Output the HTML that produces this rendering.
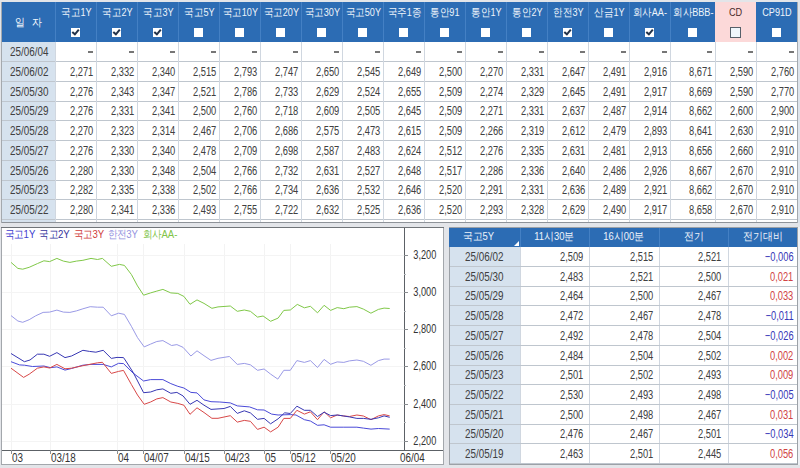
<!DOCTYPE html>
<html><head><meta charset="utf-8"><style>
html,body{margin:0;padding:0;}
body{width:800px;height:468px;position:relative;overflow:hidden;background:#e3e5e9;font-family:"Liberation Sans",sans-serif;}
body>div,body>svg{position:absolute;}
.t{white-space:nowrap;line-height:16px;height:16px;}
.t span{display:inline-block;}
</style></head><body>
<div style="left:2px;top:2px;width:795px;height:220px;background:#ffffff;"></div>
<div style="left:2px;top:42px;width:53px;height:180px;background:#d6e2ee;"></div>
<div style="left:2px;top:2px;width:795px;height:40px;background:#2c6cb4;"></div>
<div style="left:715px;top:2px;width:41px;height:40px;background:#fcd9d9;"></div>
<div style="left:55px;top:2px;width:1px;height:40px;background:#4480c4;"></div>
<div style="left:96px;top:2px;width:1px;height:40px;background:#4480c4;"></div>
<div style="left:137px;top:2px;width:1px;height:40px;background:#4480c4;"></div>
<div style="left:178px;top:2px;width:1px;height:40px;background:#4480c4;"></div>
<div style="left:219px;top:2px;width:1px;height:40px;background:#4480c4;"></div>
<div style="left:260px;top:2px;width:1px;height:40px;background:#4480c4;"></div>
<div style="left:301px;top:2px;width:1px;height:40px;background:#4480c4;"></div>
<div style="left:342px;top:2px;width:1px;height:40px;background:#4480c4;"></div>
<div style="left:383px;top:2px;width:1px;height:40px;background:#4480c4;"></div>
<div style="left:424px;top:2px;width:1px;height:40px;background:#4480c4;"></div>
<div style="left:465px;top:2px;width:1px;height:40px;background:#4480c4;"></div>
<div style="left:506px;top:2px;width:1px;height:40px;background:#4480c4;"></div>
<div style="left:547px;top:2px;width:1px;height:40px;background:#4480c4;"></div>
<div style="left:588px;top:2px;width:1px;height:40px;background:#4480c4;"></div>
<div style="left:629px;top:2px;width:1px;height:40px;background:#4480c4;"></div>
<div style="left:670px;top:2px;width:1px;height:40px;background:#4480c4;"></div>
<div style="left:2px;top:61px;width:795px;height:1px;background:#bfc6ce;"></div>
<div style="left:2px;top:81px;width:795px;height:1px;background:#bfc6ce;"></div>
<div style="left:2px;top:101px;width:795px;height:1px;background:#bfc6ce;"></div>
<div style="left:2px;top:120px;width:795px;height:1px;background:#bfc6ce;"></div>
<div style="left:2px;top:140px;width:795px;height:1px;background:#bfc6ce;"></div>
<div style="left:2px;top:160px;width:795px;height:1px;background:#bfc6ce;"></div>
<div style="left:2px;top:180px;width:795px;height:1px;background:#bfc6ce;"></div>
<div style="left:2px;top:199px;width:795px;height:1px;background:#bfc6ce;"></div>
<div style="left:2px;top:219px;width:795px;height:1px;background:#bfc6ce;"></div>
<div style="left:55px;top:42px;width:1px;height:180px;background:#d0d7e0;"></div>
<div style="left:96px;top:42px;width:1px;height:180px;background:#d0d7e0;"></div>
<div style="left:137px;top:42px;width:1px;height:180px;background:#d0d7e0;"></div>
<div style="left:178px;top:42px;width:1px;height:180px;background:#d0d7e0;"></div>
<div style="left:219px;top:42px;width:1px;height:180px;background:#d0d7e0;"></div>
<div style="left:260px;top:42px;width:1px;height:180px;background:#d0d7e0;"></div>
<div style="left:301px;top:42px;width:1px;height:180px;background:#d0d7e0;"></div>
<div style="left:342px;top:42px;width:1px;height:180px;background:#d0d7e0;"></div>
<div style="left:383px;top:42px;width:1px;height:180px;background:#d0d7e0;"></div>
<div style="left:424px;top:42px;width:1px;height:180px;background:#d0d7e0;"></div>
<div style="left:465px;top:42px;width:1px;height:180px;background:#d0d7e0;"></div>
<div style="left:506px;top:42px;width:1px;height:180px;background:#d0d7e0;"></div>
<div style="left:547px;top:42px;width:1px;height:180px;background:#d0d7e0;"></div>
<div style="left:588px;top:42px;width:1px;height:180px;background:#d0d7e0;"></div>
<div style="left:629px;top:42px;width:1px;height:180px;background:#d0d7e0;"></div>
<div style="left:670px;top:42px;width:1px;height:180px;background:#d0d7e0;"></div>
<div style="left:715px;top:42px;width:1px;height:180px;background:#d0d7e0;"></div>
<div style="left:756px;top:42px;width:1px;height:180px;background:#d0d7e0;"></div>
<div style="left:1px;top:222px;width:797px;height:1px;background:#8e9399;"></div>
<div style="left:1px;top:2px;width:1px;height:221px;background:#a4a9ae;"></div>
<div style="left:797px;top:2px;width:1px;height:221px;background:#a4a9ae;"></div>
<div class="t" style="left:1px;top:13.600000000000001px;width:54px;text-align:center;color:#f4f8fc;font-size:10.5px;"><span style="transform:scaleX(0.9);transform-origin:50% 50%">일&nbsp;&nbsp;&nbsp;자</span></div>
<div class="t" style="left:55px;top:4.300000000000001px;width:42px;text-align:center;color:#eef4fb;font-size:10.5px;"><span style="transform:scaleX(0.87);transform-origin:50% 50%">국고1Y</span></div>
<div style="left:71px;top:28px;width:9px;height:9px;background:#ffffff"></div>
<svg style="left:71px;top:28px" width="9" height="9" viewBox="0 0 9 9"><path d="M1.3 3.9 L3.9 6.3 L7.8 1.6" stroke="#23334a" stroke-width="2" fill="none"/></svg>
<div class="t" style="left:96px;top:4.300000000000001px;width:42px;text-align:center;color:#eef4fb;font-size:10.5px;"><span style="transform:scaleX(0.87);transform-origin:50% 50%">국고2Y</span></div>
<div style="left:112px;top:28px;width:9px;height:9px;background:#ffffff"></div>
<svg style="left:112px;top:28px" width="9" height="9" viewBox="0 0 9 9"><path d="M1.3 3.9 L3.9 6.3 L7.8 1.6" stroke="#23334a" stroke-width="2" fill="none"/></svg>
<div class="t" style="left:137px;top:4.300000000000001px;width:42px;text-align:center;color:#eef4fb;font-size:10.5px;"><span style="transform:scaleX(0.87);transform-origin:50% 50%">국고3Y</span></div>
<div style="left:153px;top:28px;width:9px;height:9px;background:#ffffff"></div>
<svg style="left:153px;top:28px" width="9" height="9" viewBox="0 0 9 9"><path d="M1.3 3.9 L3.9 6.3 L7.8 1.6" stroke="#23334a" stroke-width="2" fill="none"/></svg>
<div class="t" style="left:178px;top:4.300000000000001px;width:42px;text-align:center;color:#eef4fb;font-size:10.5px;"><span style="transform:scaleX(0.87);transform-origin:50% 50%">국고5Y</span></div>
<div style="left:194px;top:28px;width:9px;height:9px;background:#ffffff"></div>
<div class="t" style="left:219px;top:4.300000000000001px;width:42px;text-align:center;color:#eef4fb;font-size:10.5px;"><span style="transform:scaleX(0.87);transform-origin:50% 50%">국고10Y</span></div>
<div style="left:235px;top:28px;width:9px;height:9px;background:#ffffff"></div>
<div class="t" style="left:260px;top:4.300000000000001px;width:42px;text-align:center;color:#eef4fb;font-size:10.5px;"><span style="transform:scaleX(0.87);transform-origin:50% 50%">국고20Y</span></div>
<div style="left:276px;top:28px;width:9px;height:9px;background:#ffffff"></div>
<div class="t" style="left:301px;top:4.300000000000001px;width:42px;text-align:center;color:#eef4fb;font-size:10.5px;"><span style="transform:scaleX(0.87);transform-origin:50% 50%">국고30Y</span></div>
<div style="left:317px;top:28px;width:9px;height:9px;background:#ffffff"></div>
<div class="t" style="left:342px;top:4.300000000000001px;width:42px;text-align:center;color:#eef4fb;font-size:10.5px;"><span style="transform:scaleX(0.87);transform-origin:50% 50%">국고50Y</span></div>
<div style="left:358px;top:28px;width:9px;height:9px;background:#ffffff"></div>
<div class="t" style="left:383px;top:4.300000000000001px;width:42px;text-align:center;color:#eef4fb;font-size:10.5px;"><span style="transform:scaleX(0.87);transform-origin:50% 50%">국주1종</span></div>
<div style="left:399px;top:28px;width:9px;height:9px;background:#ffffff"></div>
<div class="t" style="left:424px;top:4.300000000000001px;width:42px;text-align:center;color:#eef4fb;font-size:10.5px;"><span style="transform:scaleX(0.87);transform-origin:50% 50%">통안91</span></div>
<div style="left:440px;top:28px;width:9px;height:9px;background:#ffffff"></div>
<div class="t" style="left:465px;top:4.300000000000001px;width:42px;text-align:center;color:#eef4fb;font-size:10.5px;"><span style="transform:scaleX(0.87);transform-origin:50% 50%">통안1Y</span></div>
<div style="left:481px;top:28px;width:9px;height:9px;background:#ffffff"></div>
<div class="t" style="left:506px;top:4.300000000000001px;width:42px;text-align:center;color:#eef4fb;font-size:10.5px;"><span style="transform:scaleX(0.87);transform-origin:50% 50%">통안2Y</span></div>
<div style="left:522px;top:28px;width:9px;height:9px;background:#ffffff"></div>
<div class="t" style="left:547px;top:4.300000000000001px;width:42px;text-align:center;color:#eef4fb;font-size:10.5px;"><span style="transform:scaleX(0.87);transform-origin:50% 50%">한전3Y</span></div>
<div style="left:563px;top:28px;width:9px;height:9px;background:#ffffff"></div>
<svg style="left:563px;top:28px" width="9" height="9" viewBox="0 0 9 9"><path d="M1.3 3.9 L3.9 6.3 L7.8 1.6" stroke="#23334a" stroke-width="2" fill="none"/></svg>
<div class="t" style="left:588px;top:4.300000000000001px;width:42px;text-align:center;color:#eef4fb;font-size:10.5px;"><span style="transform:scaleX(0.87);transform-origin:50% 50%">산금1Y</span></div>
<div style="left:604px;top:28px;width:9px;height:9px;background:#ffffff"></div>
<div class="t" style="left:629px;top:4.300000000000001px;width:42px;text-align:center;color:#eef4fb;font-size:10.5px;"><span style="transform:scaleX(0.87);transform-origin:50% 50%">회사AA-</span></div>
<div style="left:645px;top:28px;width:9px;height:9px;background:#ffffff"></div>
<svg style="left:645px;top:28px" width="9" height="9" viewBox="0 0 9 9"><path d="M1.3 3.9 L3.9 6.3 L7.8 1.6" stroke="#23334a" stroke-width="2" fill="none"/></svg>
<div class="t" style="left:670px;top:4.300000000000001px;width:46px;text-align:center;color:#eef4fb;font-size:10.5px;"><span style="transform:scaleX(0.87);transform-origin:50% 50%">회사BBB-</span></div>
<div style="left:688px;top:28px;width:9px;height:9px;background:#ffffff"></div>
<div class="t" style="left:715px;top:4.300000000000001px;width:42px;text-align:center;color:#4a2c2c;font-size:10.5px;"><span style="transform:scaleX(0.87);transform-origin:50% 50%">CD</span></div>
<div style="left:730px;top:27px;width:9px;height:9px;background:#f0f6fb;border:1px solid #56606a"></div>
<div class="t" style="left:756px;top:4.300000000000001px;width:42px;text-align:center;color:#eef4fb;font-size:10.5px;"><span style="transform:scaleX(0.87);transform-origin:50% 50%">CP91D</span></div>
<div style="left:772px;top:28px;width:9px;height:9px;background:#ffffff"></div>
<div class="t" style="left:3px;top:44.1px;width:53px;text-align:center;color:#404040;font-size:12.5px;"><span style="transform:scaleX(0.79);transform-origin:50% 50%">25/06/04</span></div>
<div style="left:88px;top:51px;width:5px;height:2px;background:#767676;"></div>
<div style="left:129px;top:51px;width:5px;height:2px;background:#767676;"></div>
<div style="left:170px;top:51px;width:5px;height:2px;background:#767676;"></div>
<div style="left:211px;top:51px;width:5px;height:2px;background:#767676;"></div>
<div style="left:252px;top:51px;width:5px;height:2px;background:#767676;"></div>
<div style="left:293px;top:51px;width:5px;height:2px;background:#767676;"></div>
<div style="left:334px;top:51px;width:5px;height:2px;background:#767676;"></div>
<div style="left:375px;top:51px;width:5px;height:2px;background:#767676;"></div>
<div style="left:416px;top:51px;width:5px;height:2px;background:#767676;"></div>
<div style="left:457px;top:51px;width:5px;height:2px;background:#767676;"></div>
<div style="left:498px;top:51px;width:5px;height:2px;background:#767676;"></div>
<div style="left:539px;top:51px;width:5px;height:2px;background:#767676;"></div>
<div style="left:580px;top:51px;width:5px;height:2px;background:#767676;"></div>
<div style="left:621px;top:51px;width:5px;height:2px;background:#767676;"></div>
<div style="left:662px;top:51px;width:5px;height:2px;background:#767676;"></div>
<div style="left:707px;top:51px;width:5px;height:2px;background:#767676;"></div>
<div style="left:748px;top:51px;width:5px;height:2px;background:#767676;"></div>
<div style="left:789px;top:51px;width:5px;height:2px;background:#767676;"></div>
<div class="t" style="left:3px;top:63.599999999999994px;width:53px;text-align:center;color:#404040;font-size:12.5px;"><span style="transform:scaleX(0.79);transform-origin:50% 50%">25/06/02</span></div>
<div class="t" style="left:55px;top:63.599999999999994px;width:38px;text-align:right;color:#404040;font-size:12.5px;"><span style="transform:scaleX(0.745);transform-origin:100% 50%">2,271</span></div>
<div class="t" style="left:96px;top:63.599999999999994px;width:38px;text-align:right;color:#404040;font-size:12.5px;"><span style="transform:scaleX(0.745);transform-origin:100% 50%">2,332</span></div>
<div class="t" style="left:137px;top:63.599999999999994px;width:38px;text-align:right;color:#404040;font-size:12.5px;"><span style="transform:scaleX(0.745);transform-origin:100% 50%">2,340</span></div>
<div class="t" style="left:178px;top:63.599999999999994px;width:38px;text-align:right;color:#404040;font-size:12.5px;"><span style="transform:scaleX(0.745);transform-origin:100% 50%">2,515</span></div>
<div class="t" style="left:219px;top:63.599999999999994px;width:38px;text-align:right;color:#404040;font-size:12.5px;"><span style="transform:scaleX(0.745);transform-origin:100% 50%">2,793</span></div>
<div class="t" style="left:260px;top:63.599999999999994px;width:38px;text-align:right;color:#404040;font-size:12.5px;"><span style="transform:scaleX(0.745);transform-origin:100% 50%">2,747</span></div>
<div class="t" style="left:301px;top:63.599999999999994px;width:38px;text-align:right;color:#404040;font-size:12.5px;"><span style="transform:scaleX(0.745);transform-origin:100% 50%">2,650</span></div>
<div class="t" style="left:342px;top:63.599999999999994px;width:38px;text-align:right;color:#404040;font-size:12.5px;"><span style="transform:scaleX(0.745);transform-origin:100% 50%">2,545</span></div>
<div class="t" style="left:383px;top:63.599999999999994px;width:38px;text-align:right;color:#404040;font-size:12.5px;"><span style="transform:scaleX(0.745);transform-origin:100% 50%">2,649</span></div>
<div class="t" style="left:424px;top:63.599999999999994px;width:38px;text-align:right;color:#404040;font-size:12.5px;"><span style="transform:scaleX(0.745);transform-origin:100% 50%">2,500</span></div>
<div class="t" style="left:465px;top:63.599999999999994px;width:38px;text-align:right;color:#404040;font-size:12.5px;"><span style="transform:scaleX(0.745);transform-origin:100% 50%">2,270</span></div>
<div class="t" style="left:506px;top:63.599999999999994px;width:38px;text-align:right;color:#404040;font-size:12.5px;"><span style="transform:scaleX(0.745);transform-origin:100% 50%">2,331</span></div>
<div class="t" style="left:547px;top:63.599999999999994px;width:38px;text-align:right;color:#404040;font-size:12.5px;"><span style="transform:scaleX(0.745);transform-origin:100% 50%">2,647</span></div>
<div class="t" style="left:588px;top:63.599999999999994px;width:38px;text-align:right;color:#404040;font-size:12.5px;"><span style="transform:scaleX(0.745);transform-origin:100% 50%">2,491</span></div>
<div class="t" style="left:629px;top:63.599999999999994px;width:38px;text-align:right;color:#404040;font-size:12.5px;"><span style="transform:scaleX(0.745);transform-origin:100% 50%">2,916</span></div>
<div class="t" style="left:670px;top:63.599999999999994px;width:42px;text-align:right;color:#404040;font-size:12.5px;"><span style="transform:scaleX(0.745);transform-origin:100% 50%">8,671</span></div>
<div class="t" style="left:715px;top:63.599999999999994px;width:38px;text-align:right;color:#404040;font-size:12.5px;"><span style="transform:scaleX(0.745);transform-origin:100% 50%">2,590</span></div>
<div class="t" style="left:756px;top:63.599999999999994px;width:38px;text-align:right;color:#404040;font-size:12.5px;"><span style="transform:scaleX(0.745);transform-origin:100% 50%">2,760</span></div>
<div class="t" style="left:3px;top:83.6px;width:53px;text-align:center;color:#404040;font-size:12.5px;"><span style="transform:scaleX(0.79);transform-origin:50% 50%">25/05/30</span></div>
<div class="t" style="left:55px;top:83.6px;width:38px;text-align:right;color:#404040;font-size:12.5px;"><span style="transform:scaleX(0.745);transform-origin:100% 50%">2,276</span></div>
<div class="t" style="left:96px;top:83.6px;width:38px;text-align:right;color:#404040;font-size:12.5px;"><span style="transform:scaleX(0.745);transform-origin:100% 50%">2,343</span></div>
<div class="t" style="left:137px;top:83.6px;width:38px;text-align:right;color:#404040;font-size:12.5px;"><span style="transform:scaleX(0.745);transform-origin:100% 50%">2,347</span></div>
<div class="t" style="left:178px;top:83.6px;width:38px;text-align:right;color:#404040;font-size:12.5px;"><span style="transform:scaleX(0.745);transform-origin:100% 50%">2,521</span></div>
<div class="t" style="left:219px;top:83.6px;width:38px;text-align:right;color:#404040;font-size:12.5px;"><span style="transform:scaleX(0.745);transform-origin:100% 50%">2,786</span></div>
<div class="t" style="left:260px;top:83.6px;width:38px;text-align:right;color:#404040;font-size:12.5px;"><span style="transform:scaleX(0.745);transform-origin:100% 50%">2,733</span></div>
<div class="t" style="left:301px;top:83.6px;width:38px;text-align:right;color:#404040;font-size:12.5px;"><span style="transform:scaleX(0.745);transform-origin:100% 50%">2,629</span></div>
<div class="t" style="left:342px;top:83.6px;width:38px;text-align:right;color:#404040;font-size:12.5px;"><span style="transform:scaleX(0.745);transform-origin:100% 50%">2,524</span></div>
<div class="t" style="left:383px;top:83.6px;width:38px;text-align:right;color:#404040;font-size:12.5px;"><span style="transform:scaleX(0.745);transform-origin:100% 50%">2,655</span></div>
<div class="t" style="left:424px;top:83.6px;width:38px;text-align:right;color:#404040;font-size:12.5px;"><span style="transform:scaleX(0.745);transform-origin:100% 50%">2,509</span></div>
<div class="t" style="left:465px;top:83.6px;width:38px;text-align:right;color:#404040;font-size:12.5px;"><span style="transform:scaleX(0.745);transform-origin:100% 50%">2,274</span></div>
<div class="t" style="left:506px;top:83.6px;width:38px;text-align:right;color:#404040;font-size:12.5px;"><span style="transform:scaleX(0.745);transform-origin:100% 50%">2,329</span></div>
<div class="t" style="left:547px;top:83.6px;width:38px;text-align:right;color:#404040;font-size:12.5px;"><span style="transform:scaleX(0.745);transform-origin:100% 50%">2,645</span></div>
<div class="t" style="left:588px;top:83.6px;width:38px;text-align:right;color:#404040;font-size:12.5px;"><span style="transform:scaleX(0.745);transform-origin:100% 50%">2,491</span></div>
<div class="t" style="left:629px;top:83.6px;width:38px;text-align:right;color:#404040;font-size:12.5px;"><span style="transform:scaleX(0.745);transform-origin:100% 50%">2,917</span></div>
<div class="t" style="left:670px;top:83.6px;width:42px;text-align:right;color:#404040;font-size:12.5px;"><span style="transform:scaleX(0.745);transform-origin:100% 50%">8,669</span></div>
<div class="t" style="left:715px;top:83.6px;width:38px;text-align:right;color:#404040;font-size:12.5px;"><span style="transform:scaleX(0.745);transform-origin:100% 50%">2,590</span></div>
<div class="t" style="left:756px;top:83.6px;width:38px;text-align:right;color:#404040;font-size:12.5px;"><span style="transform:scaleX(0.745);transform-origin:100% 50%">2,770</span></div>
<div class="t" style="left:3px;top:103.1px;width:53px;text-align:center;color:#404040;font-size:12.5px;"><span style="transform:scaleX(0.79);transform-origin:50% 50%">25/05/29</span></div>
<div class="t" style="left:55px;top:103.1px;width:38px;text-align:right;color:#404040;font-size:12.5px;"><span style="transform:scaleX(0.745);transform-origin:100% 50%">2,276</span></div>
<div class="t" style="left:96px;top:103.1px;width:38px;text-align:right;color:#404040;font-size:12.5px;"><span style="transform:scaleX(0.745);transform-origin:100% 50%">2,331</span></div>
<div class="t" style="left:137px;top:103.1px;width:38px;text-align:right;color:#404040;font-size:12.5px;"><span style="transform:scaleX(0.745);transform-origin:100% 50%">2,341</span></div>
<div class="t" style="left:178px;top:103.1px;width:38px;text-align:right;color:#404040;font-size:12.5px;"><span style="transform:scaleX(0.745);transform-origin:100% 50%">2,500</span></div>
<div class="t" style="left:219px;top:103.1px;width:38px;text-align:right;color:#404040;font-size:12.5px;"><span style="transform:scaleX(0.745);transform-origin:100% 50%">2,760</span></div>
<div class="t" style="left:260px;top:103.1px;width:38px;text-align:right;color:#404040;font-size:12.5px;"><span style="transform:scaleX(0.745);transform-origin:100% 50%">2,718</span></div>
<div class="t" style="left:301px;top:103.1px;width:38px;text-align:right;color:#404040;font-size:12.5px;"><span style="transform:scaleX(0.745);transform-origin:100% 50%">2,609</span></div>
<div class="t" style="left:342px;top:103.1px;width:38px;text-align:right;color:#404040;font-size:12.5px;"><span style="transform:scaleX(0.745);transform-origin:100% 50%">2,505</span></div>
<div class="t" style="left:383px;top:103.1px;width:38px;text-align:right;color:#404040;font-size:12.5px;"><span style="transform:scaleX(0.745);transform-origin:100% 50%">2,645</span></div>
<div class="t" style="left:424px;top:103.1px;width:38px;text-align:right;color:#404040;font-size:12.5px;"><span style="transform:scaleX(0.745);transform-origin:100% 50%">2,509</span></div>
<div class="t" style="left:465px;top:103.1px;width:38px;text-align:right;color:#404040;font-size:12.5px;"><span style="transform:scaleX(0.745);transform-origin:100% 50%">2,271</span></div>
<div class="t" style="left:506px;top:103.1px;width:38px;text-align:right;color:#404040;font-size:12.5px;"><span style="transform:scaleX(0.745);transform-origin:100% 50%">2,331</span></div>
<div class="t" style="left:547px;top:103.1px;width:38px;text-align:right;color:#404040;font-size:12.5px;"><span style="transform:scaleX(0.745);transform-origin:100% 50%">2,637</span></div>
<div class="t" style="left:588px;top:103.1px;width:38px;text-align:right;color:#404040;font-size:12.5px;"><span style="transform:scaleX(0.745);transform-origin:100% 50%">2,487</span></div>
<div class="t" style="left:629px;top:103.1px;width:38px;text-align:right;color:#404040;font-size:12.5px;"><span style="transform:scaleX(0.745);transform-origin:100% 50%">2,914</span></div>
<div class="t" style="left:670px;top:103.1px;width:42px;text-align:right;color:#404040;font-size:12.5px;"><span style="transform:scaleX(0.745);transform-origin:100% 50%">8,662</span></div>
<div class="t" style="left:715px;top:103.1px;width:38px;text-align:right;color:#404040;font-size:12.5px;"><span style="transform:scaleX(0.745);transform-origin:100% 50%">2,600</span></div>
<div class="t" style="left:756px;top:103.1px;width:38px;text-align:right;color:#404040;font-size:12.5px;"><span style="transform:scaleX(0.745);transform-origin:100% 50%">2,900</span></div>
<div class="t" style="left:3px;top:122.6px;width:53px;text-align:center;color:#404040;font-size:12.5px;"><span style="transform:scaleX(0.79);transform-origin:50% 50%">25/05/28</span></div>
<div class="t" style="left:55px;top:122.6px;width:38px;text-align:right;color:#404040;font-size:12.5px;"><span style="transform:scaleX(0.745);transform-origin:100% 50%">2,270</span></div>
<div class="t" style="left:96px;top:122.6px;width:38px;text-align:right;color:#404040;font-size:12.5px;"><span style="transform:scaleX(0.745);transform-origin:100% 50%">2,323</span></div>
<div class="t" style="left:137px;top:122.6px;width:38px;text-align:right;color:#404040;font-size:12.5px;"><span style="transform:scaleX(0.745);transform-origin:100% 50%">2,314</span></div>
<div class="t" style="left:178px;top:122.6px;width:38px;text-align:right;color:#404040;font-size:12.5px;"><span style="transform:scaleX(0.745);transform-origin:100% 50%">2,467</span></div>
<div class="t" style="left:219px;top:122.6px;width:38px;text-align:right;color:#404040;font-size:12.5px;"><span style="transform:scaleX(0.745);transform-origin:100% 50%">2,706</span></div>
<div class="t" style="left:260px;top:122.6px;width:38px;text-align:right;color:#404040;font-size:12.5px;"><span style="transform:scaleX(0.745);transform-origin:100% 50%">2,686</span></div>
<div class="t" style="left:301px;top:122.6px;width:38px;text-align:right;color:#404040;font-size:12.5px;"><span style="transform:scaleX(0.745);transform-origin:100% 50%">2,575</span></div>
<div class="t" style="left:342px;top:122.6px;width:38px;text-align:right;color:#404040;font-size:12.5px;"><span style="transform:scaleX(0.745);transform-origin:100% 50%">2,473</span></div>
<div class="t" style="left:383px;top:122.6px;width:38px;text-align:right;color:#404040;font-size:12.5px;"><span style="transform:scaleX(0.745);transform-origin:100% 50%">2,615</span></div>
<div class="t" style="left:424px;top:122.6px;width:38px;text-align:right;color:#404040;font-size:12.5px;"><span style="transform:scaleX(0.745);transform-origin:100% 50%">2,509</span></div>
<div class="t" style="left:465px;top:122.6px;width:38px;text-align:right;color:#404040;font-size:12.5px;"><span style="transform:scaleX(0.745);transform-origin:100% 50%">2,266</span></div>
<div class="t" style="left:506px;top:122.6px;width:38px;text-align:right;color:#404040;font-size:12.5px;"><span style="transform:scaleX(0.745);transform-origin:100% 50%">2,319</span></div>
<div class="t" style="left:547px;top:122.6px;width:38px;text-align:right;color:#404040;font-size:12.5px;"><span style="transform:scaleX(0.745);transform-origin:100% 50%">2,612</span></div>
<div class="t" style="left:588px;top:122.6px;width:38px;text-align:right;color:#404040;font-size:12.5px;"><span style="transform:scaleX(0.745);transform-origin:100% 50%">2,479</span></div>
<div class="t" style="left:629px;top:122.6px;width:38px;text-align:right;color:#404040;font-size:12.5px;"><span style="transform:scaleX(0.745);transform-origin:100% 50%">2,893</span></div>
<div class="t" style="left:670px;top:122.6px;width:42px;text-align:right;color:#404040;font-size:12.5px;"><span style="transform:scaleX(0.745);transform-origin:100% 50%">8,641</span></div>
<div class="t" style="left:715px;top:122.6px;width:38px;text-align:right;color:#404040;font-size:12.5px;"><span style="transform:scaleX(0.745);transform-origin:100% 50%">2,630</span></div>
<div class="t" style="left:756px;top:122.6px;width:38px;text-align:right;color:#404040;font-size:12.5px;"><span style="transform:scaleX(0.745);transform-origin:100% 50%">2,910</span></div>
<div class="t" style="left:3px;top:142.6px;width:53px;text-align:center;color:#404040;font-size:12.5px;"><span style="transform:scaleX(0.79);transform-origin:50% 50%">25/05/27</span></div>
<div class="t" style="left:55px;top:142.6px;width:38px;text-align:right;color:#404040;font-size:12.5px;"><span style="transform:scaleX(0.745);transform-origin:100% 50%">2,276</span></div>
<div class="t" style="left:96px;top:142.6px;width:38px;text-align:right;color:#404040;font-size:12.5px;"><span style="transform:scaleX(0.745);transform-origin:100% 50%">2,330</span></div>
<div class="t" style="left:137px;top:142.6px;width:38px;text-align:right;color:#404040;font-size:12.5px;"><span style="transform:scaleX(0.745);transform-origin:100% 50%">2,340</span></div>
<div class="t" style="left:178px;top:142.6px;width:38px;text-align:right;color:#404040;font-size:12.5px;"><span style="transform:scaleX(0.745);transform-origin:100% 50%">2,478</span></div>
<div class="t" style="left:219px;top:142.6px;width:38px;text-align:right;color:#404040;font-size:12.5px;"><span style="transform:scaleX(0.745);transform-origin:100% 50%">2,709</span></div>
<div class="t" style="left:260px;top:142.6px;width:38px;text-align:right;color:#404040;font-size:12.5px;"><span style="transform:scaleX(0.745);transform-origin:100% 50%">2,698</span></div>
<div class="t" style="left:301px;top:142.6px;width:38px;text-align:right;color:#404040;font-size:12.5px;"><span style="transform:scaleX(0.745);transform-origin:100% 50%">2,587</span></div>
<div class="t" style="left:342px;top:142.6px;width:38px;text-align:right;color:#404040;font-size:12.5px;"><span style="transform:scaleX(0.745);transform-origin:100% 50%">2,483</span></div>
<div class="t" style="left:383px;top:142.6px;width:38px;text-align:right;color:#404040;font-size:12.5px;"><span style="transform:scaleX(0.745);transform-origin:100% 50%">2,624</span></div>
<div class="t" style="left:424px;top:142.6px;width:38px;text-align:right;color:#404040;font-size:12.5px;"><span style="transform:scaleX(0.745);transform-origin:100% 50%">2,512</span></div>
<div class="t" style="left:465px;top:142.6px;width:38px;text-align:right;color:#404040;font-size:12.5px;"><span style="transform:scaleX(0.745);transform-origin:100% 50%">2,276</span></div>
<div class="t" style="left:506px;top:142.6px;width:38px;text-align:right;color:#404040;font-size:12.5px;"><span style="transform:scaleX(0.745);transform-origin:100% 50%">2,335</span></div>
<div class="t" style="left:547px;top:142.6px;width:38px;text-align:right;color:#404040;font-size:12.5px;"><span style="transform:scaleX(0.745);transform-origin:100% 50%">2,631</span></div>
<div class="t" style="left:588px;top:142.6px;width:38px;text-align:right;color:#404040;font-size:12.5px;"><span style="transform:scaleX(0.745);transform-origin:100% 50%">2,481</span></div>
<div class="t" style="left:629px;top:142.6px;width:38px;text-align:right;color:#404040;font-size:12.5px;"><span style="transform:scaleX(0.745);transform-origin:100% 50%">2,913</span></div>
<div class="t" style="left:670px;top:142.6px;width:42px;text-align:right;color:#404040;font-size:12.5px;"><span style="transform:scaleX(0.745);transform-origin:100% 50%">8,656</span></div>
<div class="t" style="left:715px;top:142.6px;width:38px;text-align:right;color:#404040;font-size:12.5px;"><span style="transform:scaleX(0.745);transform-origin:100% 50%">2,660</span></div>
<div class="t" style="left:756px;top:142.6px;width:38px;text-align:right;color:#404040;font-size:12.5px;"><span style="transform:scaleX(0.745);transform-origin:100% 50%">2,910</span></div>
<div class="t" style="left:3px;top:162.6px;width:53px;text-align:center;color:#404040;font-size:12.5px;"><span style="transform:scaleX(0.79);transform-origin:50% 50%">25/05/26</span></div>
<div class="t" style="left:55px;top:162.6px;width:38px;text-align:right;color:#404040;font-size:12.5px;"><span style="transform:scaleX(0.745);transform-origin:100% 50%">2,280</span></div>
<div class="t" style="left:96px;top:162.6px;width:38px;text-align:right;color:#404040;font-size:12.5px;"><span style="transform:scaleX(0.745);transform-origin:100% 50%">2,330</span></div>
<div class="t" style="left:137px;top:162.6px;width:38px;text-align:right;color:#404040;font-size:12.5px;"><span style="transform:scaleX(0.745);transform-origin:100% 50%">2,348</span></div>
<div class="t" style="left:178px;top:162.6px;width:38px;text-align:right;color:#404040;font-size:12.5px;"><span style="transform:scaleX(0.745);transform-origin:100% 50%">2,504</span></div>
<div class="t" style="left:219px;top:162.6px;width:38px;text-align:right;color:#404040;font-size:12.5px;"><span style="transform:scaleX(0.745);transform-origin:100% 50%">2,766</span></div>
<div class="t" style="left:260px;top:162.6px;width:38px;text-align:right;color:#404040;font-size:12.5px;"><span style="transform:scaleX(0.745);transform-origin:100% 50%">2,732</span></div>
<div class="t" style="left:301px;top:162.6px;width:38px;text-align:right;color:#404040;font-size:12.5px;"><span style="transform:scaleX(0.745);transform-origin:100% 50%">2,631</span></div>
<div class="t" style="left:342px;top:162.6px;width:38px;text-align:right;color:#404040;font-size:12.5px;"><span style="transform:scaleX(0.745);transform-origin:100% 50%">2,527</span></div>
<div class="t" style="left:383px;top:162.6px;width:38px;text-align:right;color:#404040;font-size:12.5px;"><span style="transform:scaleX(0.745);transform-origin:100% 50%">2,648</span></div>
<div class="t" style="left:424px;top:162.6px;width:38px;text-align:right;color:#404040;font-size:12.5px;"><span style="transform:scaleX(0.745);transform-origin:100% 50%">2,517</span></div>
<div class="t" style="left:465px;top:162.6px;width:38px;text-align:right;color:#404040;font-size:12.5px;"><span style="transform:scaleX(0.745);transform-origin:100% 50%">2,286</span></div>
<div class="t" style="left:506px;top:162.6px;width:38px;text-align:right;color:#404040;font-size:12.5px;"><span style="transform:scaleX(0.745);transform-origin:100% 50%">2,336</span></div>
<div class="t" style="left:547px;top:162.6px;width:38px;text-align:right;color:#404040;font-size:12.5px;"><span style="transform:scaleX(0.745);transform-origin:100% 50%">2,640</span></div>
<div class="t" style="left:588px;top:162.6px;width:38px;text-align:right;color:#404040;font-size:12.5px;"><span style="transform:scaleX(0.745);transform-origin:100% 50%">2,486</span></div>
<div class="t" style="left:629px;top:162.6px;width:38px;text-align:right;color:#404040;font-size:12.5px;"><span style="transform:scaleX(0.745);transform-origin:100% 50%">2,926</span></div>
<div class="t" style="left:670px;top:162.6px;width:42px;text-align:right;color:#404040;font-size:12.5px;"><span style="transform:scaleX(0.745);transform-origin:100% 50%">8,667</span></div>
<div class="t" style="left:715px;top:162.6px;width:38px;text-align:right;color:#404040;font-size:12.5px;"><span style="transform:scaleX(0.745);transform-origin:100% 50%">2,670</span></div>
<div class="t" style="left:756px;top:162.6px;width:38px;text-align:right;color:#404040;font-size:12.5px;"><span style="transform:scaleX(0.745);transform-origin:100% 50%">2,910</span></div>
<div class="t" style="left:3px;top:182.1px;width:53px;text-align:center;color:#404040;font-size:12.5px;"><span style="transform:scaleX(0.79);transform-origin:50% 50%">25/05/23</span></div>
<div class="t" style="left:55px;top:182.1px;width:38px;text-align:right;color:#404040;font-size:12.5px;"><span style="transform:scaleX(0.745);transform-origin:100% 50%">2,282</span></div>
<div class="t" style="left:96px;top:182.1px;width:38px;text-align:right;color:#404040;font-size:12.5px;"><span style="transform:scaleX(0.745);transform-origin:100% 50%">2,335</span></div>
<div class="t" style="left:137px;top:182.1px;width:38px;text-align:right;color:#404040;font-size:12.5px;"><span style="transform:scaleX(0.745);transform-origin:100% 50%">2,338</span></div>
<div class="t" style="left:178px;top:182.1px;width:38px;text-align:right;color:#404040;font-size:12.5px;"><span style="transform:scaleX(0.745);transform-origin:100% 50%">2,502</span></div>
<div class="t" style="left:219px;top:182.1px;width:38px;text-align:right;color:#404040;font-size:12.5px;"><span style="transform:scaleX(0.745);transform-origin:100% 50%">2,766</span></div>
<div class="t" style="left:260px;top:182.1px;width:38px;text-align:right;color:#404040;font-size:12.5px;"><span style="transform:scaleX(0.745);transform-origin:100% 50%">2,734</span></div>
<div class="t" style="left:301px;top:182.1px;width:38px;text-align:right;color:#404040;font-size:12.5px;"><span style="transform:scaleX(0.745);transform-origin:100% 50%">2,636</span></div>
<div class="t" style="left:342px;top:182.1px;width:38px;text-align:right;color:#404040;font-size:12.5px;"><span style="transform:scaleX(0.745);transform-origin:100% 50%">2,532</span></div>
<div class="t" style="left:383px;top:182.1px;width:38px;text-align:right;color:#404040;font-size:12.5px;"><span style="transform:scaleX(0.745);transform-origin:100% 50%">2,646</span></div>
<div class="t" style="left:424px;top:182.1px;width:38px;text-align:right;color:#404040;font-size:12.5px;"><span style="transform:scaleX(0.745);transform-origin:100% 50%">2,520</span></div>
<div class="t" style="left:465px;top:182.1px;width:38px;text-align:right;color:#404040;font-size:12.5px;"><span style="transform:scaleX(0.745);transform-origin:100% 50%">2,291</span></div>
<div class="t" style="left:506px;top:182.1px;width:38px;text-align:right;color:#404040;font-size:12.5px;"><span style="transform:scaleX(0.745);transform-origin:100% 50%">2,331</span></div>
<div class="t" style="left:547px;top:182.1px;width:38px;text-align:right;color:#404040;font-size:12.5px;"><span style="transform:scaleX(0.745);transform-origin:100% 50%">2,636</span></div>
<div class="t" style="left:588px;top:182.1px;width:38px;text-align:right;color:#404040;font-size:12.5px;"><span style="transform:scaleX(0.745);transform-origin:100% 50%">2,489</span></div>
<div class="t" style="left:629px;top:182.1px;width:38px;text-align:right;color:#404040;font-size:12.5px;"><span style="transform:scaleX(0.745);transform-origin:100% 50%">2,921</span></div>
<div class="t" style="left:670px;top:182.1px;width:42px;text-align:right;color:#404040;font-size:12.5px;"><span style="transform:scaleX(0.745);transform-origin:100% 50%">8,662</span></div>
<div class="t" style="left:715px;top:182.1px;width:38px;text-align:right;color:#404040;font-size:12.5px;"><span style="transform:scaleX(0.745);transform-origin:100% 50%">2,670</span></div>
<div class="t" style="left:756px;top:182.1px;width:38px;text-align:right;color:#404040;font-size:12.5px;"><span style="transform:scaleX(0.745);transform-origin:100% 50%">2,910</span></div>
<div class="t" style="left:3px;top:201.6px;width:53px;text-align:center;color:#404040;font-size:12.5px;"><span style="transform:scaleX(0.79);transform-origin:50% 50%">25/05/22</span></div>
<div class="t" style="left:55px;top:201.6px;width:38px;text-align:right;color:#404040;font-size:12.5px;"><span style="transform:scaleX(0.745);transform-origin:100% 50%">2,280</span></div>
<div class="t" style="left:96px;top:201.6px;width:38px;text-align:right;color:#404040;font-size:12.5px;"><span style="transform:scaleX(0.745);transform-origin:100% 50%">2,341</span></div>
<div class="t" style="left:137px;top:201.6px;width:38px;text-align:right;color:#404040;font-size:12.5px;"><span style="transform:scaleX(0.745);transform-origin:100% 50%">2,336</span></div>
<div class="t" style="left:178px;top:201.6px;width:38px;text-align:right;color:#404040;font-size:12.5px;"><span style="transform:scaleX(0.745);transform-origin:100% 50%">2,493</span></div>
<div class="t" style="left:219px;top:201.6px;width:38px;text-align:right;color:#404040;font-size:12.5px;"><span style="transform:scaleX(0.745);transform-origin:100% 50%">2,755</span></div>
<div class="t" style="left:260px;top:201.6px;width:38px;text-align:right;color:#404040;font-size:12.5px;"><span style="transform:scaleX(0.745);transform-origin:100% 50%">2,722</span></div>
<div class="t" style="left:301px;top:201.6px;width:38px;text-align:right;color:#404040;font-size:12.5px;"><span style="transform:scaleX(0.745);transform-origin:100% 50%">2,632</span></div>
<div class="t" style="left:342px;top:201.6px;width:38px;text-align:right;color:#404040;font-size:12.5px;"><span style="transform:scaleX(0.745);transform-origin:100% 50%">2,525</span></div>
<div class="t" style="left:383px;top:201.6px;width:38px;text-align:right;color:#404040;font-size:12.5px;"><span style="transform:scaleX(0.745);transform-origin:100% 50%">2,636</span></div>
<div class="t" style="left:424px;top:201.6px;width:38px;text-align:right;color:#404040;font-size:12.5px;"><span style="transform:scaleX(0.745);transform-origin:100% 50%">2,520</span></div>
<div class="t" style="left:465px;top:201.6px;width:38px;text-align:right;color:#404040;font-size:12.5px;"><span style="transform:scaleX(0.745);transform-origin:100% 50%">2,293</span></div>
<div class="t" style="left:506px;top:201.6px;width:38px;text-align:right;color:#404040;font-size:12.5px;"><span style="transform:scaleX(0.745);transform-origin:100% 50%">2,328</span></div>
<div class="t" style="left:547px;top:201.6px;width:38px;text-align:right;color:#404040;font-size:12.5px;"><span style="transform:scaleX(0.745);transform-origin:100% 50%">2,629</span></div>
<div class="t" style="left:588px;top:201.6px;width:38px;text-align:right;color:#404040;font-size:12.5px;"><span style="transform:scaleX(0.745);transform-origin:100% 50%">2,490</span></div>
<div class="t" style="left:629px;top:201.6px;width:38px;text-align:right;color:#404040;font-size:12.5px;"><span style="transform:scaleX(0.745);transform-origin:100% 50%">2,917</span></div>
<div class="t" style="left:670px;top:201.6px;width:42px;text-align:right;color:#404040;font-size:12.5px;"><span style="transform:scaleX(0.745);transform-origin:100% 50%">8,658</span></div>
<div class="t" style="left:715px;top:201.6px;width:38px;text-align:right;color:#404040;font-size:12.5px;"><span style="transform:scaleX(0.745);transform-origin:100% 50%">2,670</span></div>
<div class="t" style="left:756px;top:201.6px;width:38px;text-align:right;color:#404040;font-size:12.5px;"><span style="transform:scaleX(0.745);transform-origin:100% 50%">2,910</span></div>
<div style="left:1px;top:227px;width:443px;height:238px;background:#a3a7ac;"></div>
<div style="left:1px;top:227px;width:443px;height:1px;background:#707478;"></div>
<div style="left:2px;top:228px;width:441px;height:236px;background:#ffffff;"></div>
<svg style="left:0;top:0" width="445" height="468" viewBox="0 0 445 468" font-family="Liberation Sans, sans-serif">
<line x1="11.5" y1="244" x2="11.5" y2="450" stroke="#f3f3f3" stroke-width="1"/>
<line x1="50.5" y1="244" x2="50.5" y2="450" stroke="#f3f3f3" stroke-width="1"/>
<line x1="117.5" y1="244" x2="117.5" y2="450" stroke="#f3f3f3" stroke-width="1"/>
<line x1="143.5" y1="244" x2="143.5" y2="450" stroke="#f3f3f3" stroke-width="1"/>
<line x1="184.5" y1="244" x2="184.5" y2="450" stroke="#f3f3f3" stroke-width="1"/>
<line x1="224.5" y1="244" x2="224.5" y2="450" stroke="#f3f3f3" stroke-width="1"/>
<line x1="264.5" y1="244" x2="264.5" y2="450" stroke="#f3f3f3" stroke-width="1"/>
<line x1="290.5" y1="244" x2="290.5" y2="450" stroke="#f3f3f3" stroke-width="1"/>
<line x1="330.5" y1="244" x2="330.5" y2="450" stroke="#f3f3f3" stroke-width="1"/>
<line x1="2" y1="255.5" x2="404" y2="255.5" stroke="#f4f4f4" stroke-width="1"/>
<line x1="2" y1="292.5" x2="404" y2="292.5" stroke="#f4f4f4" stroke-width="1"/>
<line x1="2" y1="329.5" x2="404" y2="329.5" stroke="#f4f4f4" stroke-width="1"/>
<line x1="2" y1="366.5" x2="404" y2="366.5" stroke="#f4f4f4" stroke-width="1"/>
<line x1="2" y1="404.5" x2="404" y2="404.5" stroke="#f4f4f4" stroke-width="1"/>
<line x1="2" y1="441.5" x2="404" y2="441.5" stroke="#f4f4f4" stroke-width="1"/>
<line x1="2" y1="450.5" x2="443" y2="450.5" stroke="#5c6166" stroke-width="1"/>
<line x1="404.5" y1="228" x2="404.5" y2="450" stroke="#5c6166" stroke-width="1"/>
<line x1="11.5" y1="450" x2="11.5" y2="454" stroke="#8a8e92" stroke-width="1"/>
<line x1="50.5" y1="450" x2="50.5" y2="454" stroke="#8a8e92" stroke-width="1"/>
<line x1="117.5" y1="450" x2="117.5" y2="454" stroke="#8a8e92" stroke-width="1"/>
<line x1="143.5" y1="450" x2="143.5" y2="454" stroke="#8a8e92" stroke-width="1"/>
<line x1="184.5" y1="450" x2="184.5" y2="454" stroke="#8a8e92" stroke-width="1"/>
<line x1="224.5" y1="450" x2="224.5" y2="454" stroke="#8a8e92" stroke-width="1"/>
<line x1="264.5" y1="450" x2="264.5" y2="454" stroke="#8a8e92" stroke-width="1"/>
<line x1="290.5" y1="450" x2="290.5" y2="454" stroke="#8a8e92" stroke-width="1"/>
<line x1="330.5" y1="450" x2="330.5" y2="454" stroke="#8a8e92" stroke-width="1"/>
<line x1="404" y1="255.5" x2="408" y2="255.5" stroke="#8a8e92" stroke-width="1"/>
<line x1="404" y1="274.5" x2="406" y2="274.5" stroke="#b0b4b8" stroke-width="1"/>
<line x1="404" y1="292.5" x2="408" y2="292.5" stroke="#8a8e92" stroke-width="1"/>
<line x1="404" y1="311.5" x2="406" y2="311.5" stroke="#b0b4b8" stroke-width="1"/>
<line x1="404" y1="329.5" x2="408" y2="329.5" stroke="#8a8e92" stroke-width="1"/>
<line x1="404" y1="348.5" x2="406" y2="348.5" stroke="#b0b4b8" stroke-width="1"/>
<line x1="404" y1="366.5" x2="408" y2="366.5" stroke="#8a8e92" stroke-width="1"/>
<line x1="404" y1="385.5" x2="406" y2="385.5" stroke="#b0b4b8" stroke-width="1"/>
<line x1="404" y1="404.5" x2="408" y2="404.5" stroke="#8a8e92" stroke-width="1"/>
<line x1="404" y1="422.5" x2="406" y2="422.5" stroke="#b0b4b8" stroke-width="1"/>
<line x1="404" y1="441.5" x2="408" y2="441.5" stroke="#8a8e92" stroke-width="1"/>
<text x="436.3" y="259.2" font-size="12.5" fill="#333" text-anchor="end" transform="translate(436.3 0) scale(0.735 1) translate(-436.3 0)">3,200</text>
<text x="436.3" y="296.3" font-size="12.5" fill="#333" text-anchor="end" transform="translate(436.3 0) scale(0.735 1) translate(-436.3 0)">3,000</text>
<text x="436.3" y="333.40000000000003" font-size="12.5" fill="#333" text-anchor="end" transform="translate(436.3 0) scale(0.735 1) translate(-436.3 0)">2,800</text>
<text x="436.3" y="370.5" font-size="12.5" fill="#333" text-anchor="end" transform="translate(436.3 0) scale(0.735 1) translate(-436.3 0)">2,600</text>
<text x="436.3" y="407.6" font-size="12.5" fill="#333" text-anchor="end" transform="translate(436.3 0) scale(0.735 1) translate(-436.3 0)">2,400</text>
<text x="436.3" y="444.70000000000005" font-size="12.5" fill="#333" text-anchor="end" transform="translate(436.3 0) scale(0.735 1) translate(-436.3 0)">2,200</text>
<text x="12" y="461.6" font-size="12.5" fill="#333" transform="translate(12 0) scale(0.79 1) translate(-12 0)">03</text>
<text x="51" y="461.6" font-size="12.5" fill="#333" transform="translate(51 0) scale(0.79 1) translate(-51 0)">03/18</text>
<text x="118" y="461.6" font-size="12.5" fill="#333" transform="translate(118 0) scale(0.79 1) translate(-118 0)">04</text>
<text x="144" y="461.6" font-size="12.5" fill="#333" transform="translate(144 0) scale(0.79 1) translate(-144 0)">04/07</text>
<text x="185" y="461.6" font-size="12.5" fill="#333" transform="translate(185 0) scale(0.79 1) translate(-185 0)">04/15</text>
<text x="225" y="461.6" font-size="12.5" fill="#333" transform="translate(225 0) scale(0.79 1) translate(-225 0)">04/23</text>
<text x="265" y="461.6" font-size="12.5" fill="#333" transform="translate(265 0) scale(0.79 1) translate(-265 0)">05</text>
<text x="291" y="461.6" font-size="12.5" fill="#333" transform="translate(291 0) scale(0.79 1) translate(-291 0)">05/12</text>
<text x="331" y="461.6" font-size="12.5" fill="#333" transform="translate(331 0) scale(0.79 1) translate(-331 0)">05/20</text>
<text x="400" y="461.6" font-size="12.5" fill="#333" transform="translate(400 0) scale(0.79 1) translate(-400 0)">06/04</text>
<polyline points="11.05,262.4 17.9,268.4 22.7,269.2 29.2,267.3 37.4,263.6 43.9,260.8 49.6,261.6 56.9,258.4 63.4,261.1 69.9,262.4 76.4,261.1 82.9,260.3 91,258.4 97.5,259.5 102.4,258.4 111.3,266.3 119.4,264.4 124.4,265.4 131.4,274.5 137.5,285.9 143.6,295.2 150.6,292.9 156.8,291.1 162.9,289.4 170.8,292.9 177.8,293.4 183.9,296.4 190,304.3 197,299.9 204,303.4 211.9,308.3 218,306.9 225,306.4 230.3,306 237.3,311.3 244.3,310 250.4,311.3 257.5,317.1 263.1,316 270.6,321.3 278.1,318.1 283.8,310.4 290.3,310 297.3,304.4 304.4,307.8 310.4,306.3 317.5,312.8 324.1,305.3 330.6,310.4 337.2,307.6 343.8,308.7 349.4,307.2 356.9,306.6 363.4,309.1 370.9,313.2 378.4,309.4 384.1,308.1 389.7,308.5" fill="none" stroke="#80c848" stroke-width="1.0" stroke-linejoin="round"/>
<polyline points="11,315.6 17.9,321 22.7,322.3 29.2,319.7 35.7,315.8 43.1,312.4 49.6,312.1 56.9,310.1 63.4,312.1 69.9,312.4 76.4,310.9 82.9,308.8 90.2,306.7 97.5,307.2 103.2,307.2 111.3,315.8 118.6,313.2 124.4,314.4 131.4,326.3 137.5,337.6 144.2,346.9 150.6,344.1 156.8,341.5 162.9,340.6 171.6,345.5 176.9,344.6 183,347.3 190.9,356 197,350.8 204,355.7 211,360.4 218,358.3 229.4,356.5 237.3,364.4 244.3,363.4 250.4,364.8 257.5,370.3 264.1,369 270.6,374.1 277.8,379.1 283.8,370.3 290.3,370.3 296.9,360.6 304.4,362.4 310.4,360.6 317.5,367.5 324.1,359.4 330.6,364.3 337.2,361.9 343.8,362.4 349.4,360.9 356.9,360 363.4,361.3 370.9,365.3 378.4,360.6 384.1,359.1 389.7,359.1" fill="none" stroke="#9a9ae6" stroke-width="1.0" stroke-linejoin="round"/>
<polyline points="11,361.7 19.5,364.9 24.4,365.2 32.5,366.5 43.9,366 50.4,367.7 56.9,366.9 65,370.1 71.5,368.5 82.9,365.2 91,364.4 103.2,364.4 111.3,366.9 118.6,363.3 123.5,363.6 133.1,373.1 143.6,381 150.6,379.6 162.9,379.6 170.8,383.6 177.8,386.3 183.9,388 190.9,392.4 197,392.9 204,399.9 211,401.7 219.8,402 230.3,402.9 237.3,405.9 249.5,406.9 257.5,409.8 264.1,410 271.6,414.1 278.1,415 290.3,414.6 296,415 304.4,419.7 310.4,421 317.5,425.3 324.1,424.8 330.6,427.2 343.8,427.2 356.9,427.2 363.4,428.1 371,429.1 378.4,428.5 389.7,429.1" fill="none" stroke="#4a4ad8" stroke-width="1.0" stroke-linejoin="round"/>
<polyline points="11,368.2 23.6,377.4 29.2,374.2 37.4,368.2 43.9,366.9 49.6,368 56.9,364.4 65,368.8 71.5,368.2 82.9,365.7 91,364.1 97.5,362.8 102.4,362.3 111.3,373.4 118.6,371.4 123.5,370.4 131.4,384.5 137.5,395 144.2,404.3 150.6,402 156.8,398.9 162.9,397.6 170.8,402 177.8,403.4 183.9,405.2 190,414.3 197,407.8 204,412.5 211.9,418.3 218,418.3 230.3,415.7 237.3,422.1 244.3,420.4 250.4,421.3 257.5,429.4 264.1,427.2 270.6,431.9 278.1,427.2 283.8,418.4 290.3,418.4 296.9,410.3 304.4,414.1 310.4,411.8 317.5,419.7 324.1,411.8 330.6,417.8 337.2,415 343.8,416 349.4,416.5 356.9,415 363.4,416 371,419.7 378.4,415.9 384.1,414.6 389.7,415.9" fill="none" stroke="#d84848" stroke-width="1.0" stroke-linejoin="round"/>
<polyline points="11,353.5 24.4,361.7 30,360 37.4,354.2 43.9,354.2 49.6,356.3 56.9,352.6 65,357.6 71.5,356 82.9,350.3 89.4,351.4 95.9,352.2 103.2,350.3 111.3,358.4 117,357.4 123.5,357.6 125.2,360 133.1,372.3 143.6,392.7 150.6,392 156.8,389.8 162.9,388.9 170.8,393.3 176.9,392.4 183,395.9 190,404.3 197,400.3 204,405.2 211,409.4 224.1,408.5 230.3,406.4 237.3,413.4 244.3,410.8 250.4,412.9 257.5,419.3 264.1,418.4 270.6,423.8 278.1,418.8 284.7,412.8 290.3,413.5 296.9,406.2 304.4,410.3 310.4,410.3 317.5,416.5 324.1,412.2 330.6,415.6 337.2,415 343.8,416 349.4,416.9 356.9,418.4 363.4,418.4 371,419.3 378.4,417.8 384.1,415.9 389.7,417.3" fill="none" stroke="#3838b4" stroke-width="1.0" stroke-linejoin="round"/>
<text x="5" y="238.2" font-size="11" fill="#3c3cd0" transform="translate(5 0) scale(0.875 1) translate(-5 0)">국고1Y</text>
<text x="39.3" y="238.2" font-size="11" fill="#34349c" transform="translate(39.3 0) scale(0.875 1) translate(-39.3 0)">국고2Y</text>
<text x="73.8" y="238.2" font-size="11" fill="#d03c3c" transform="translate(73.8 0) scale(0.875 1) translate(-73.8 0)">국고3Y</text>
<text x="107.6" y="238.2" font-size="11" fill="#9494e0" transform="translate(107.6 0) scale(0.875 1) translate(-107.6 0)">한전3Y</text>
<text x="142.8" y="238.2" font-size="11" fill="#80c448" transform="translate(142.8 0) scale(0.875 1) translate(-142.8 0)">회사AA-</text>
</svg>
<div style="left:798px;top:2px;width:2px;height:221px;background:#dde4ec;"></div>
<div style="left:798px;top:227px;width:2px;height:238px;background:#eef1f5;"></div>
<div style="left:449px;top:227px;width:349px;height:238px;background:#9ca1a7;"></div>
<div style="left:450px;top:228px;width:347px;height:236px;background:#ffffff;"></div>
<div style="left:450px;top:247px;width:70px;height:217px;background:#d6e2ee;"></div>
<div style="left:449px;top:228px;width:348px;height:19px;background:#2c6cb4;"></div>
<div style="left:520px;top:228px;width:1px;height:19px;background:#4480c4;"></div>
<div style="left:520px;top:247px;width:1px;height:217px;background:#d0d7e0;"></div>
<div style="left:589px;top:228px;width:1px;height:19px;background:#4480c4;"></div>
<div style="left:589px;top:247px;width:1px;height:217px;background:#d0d7e0;"></div>
<div style="left:659px;top:228px;width:1px;height:19px;background:#4480c4;"></div>
<div style="left:659px;top:247px;width:1px;height:217px;background:#d0d7e0;"></div>
<div style="left:728px;top:228px;width:1px;height:19px;background:#4480c4;"></div>
<div style="left:728px;top:247px;width:1px;height:217px;background:#d0d7e0;"></div>
<div style="left:450px;top:266px;width:347px;height:1px;background:#bfc6ce;"></div>
<div style="left:450px;top:286px;width:347px;height:1px;background:#bfc6ce;"></div>
<div style="left:450px;top:305px;width:347px;height:1px;background:#bfc6ce;"></div>
<div style="left:450px;top:325px;width:347px;height:1px;background:#bfc6ce;"></div>
<div style="left:450px;top:345px;width:347px;height:1px;background:#bfc6ce;"></div>
<div style="left:450px;top:365px;width:347px;height:1px;background:#bfc6ce;"></div>
<div style="left:450px;top:384px;width:347px;height:1px;background:#bfc6ce;"></div>
<div style="left:450px;top:404px;width:347px;height:1px;background:#bfc6ce;"></div>
<div style="left:450px;top:424px;width:347px;height:1px;background:#bfc6ce;"></div>
<div style="left:450px;top:443px;width:347px;height:1px;background:#bfc6ce;"></div>
<div style="left:450px;top:463px;width:347px;height:1px;background:#bfc6ce;"></div>
<div class="t" style="left:443px;top:228.3px;width:71px;text-align:center;color:#eef4fb;font-size:10.5px;"><span style="transform:scaleX(0.9);transform-origin:50% 50%">국고5Y</span></div>
<div class="t" style="left:520px;top:228.3px;width:69px;text-align:center;color:#eef4fb;font-size:10.5px;"><span style="transform:scaleX(0.9);transform-origin:50% 50%">11시30분</span></div>
<div class="t" style="left:589px;top:228.3px;width:70px;text-align:center;color:#eef4fb;font-size:10.5px;"><span style="transform:scaleX(0.9);transform-origin:50% 50%">16시00분</span></div>
<div class="t" style="left:659px;top:228.3px;width:69px;text-align:center;color:#eef4fb;font-size:10.5px;"><span style="transform:scaleX(0.9);transform-origin:50% 50%">전기</span></div>
<div class="t" style="left:728px;top:228.3px;width:69px;text-align:center;color:#eef4fb;font-size:10.5px;"><span style="transform:scaleX(0.9);transform-origin:50% 50%">전기대비</span></div>
<svg style="left:514px;top:241px" width="5" height="5" viewBox="0 0 5 5"><path d="M5 0 L5 5 L0 5 Z" fill="#ffffff"/></svg>
<div class="t" style="left:449px;top:249.10000000000002px;width:71px;text-align:center;color:#404040;font-size:12.5px;"><span style="transform:scaleX(0.79);transform-origin:50% 50%">25/06/02</span></div>
<div class="t" style="left:520px;top:249.10000000000002px;width:63px;text-align:right;color:#404040;font-size:12.5px;"><span style="transform:scaleX(0.745);transform-origin:100% 50%">2,509</span></div>
<div class="t" style="left:589px;top:249.10000000000002px;width:64px;text-align:right;color:#404040;font-size:12.5px;"><span style="transform:scaleX(0.745);transform-origin:100% 50%">2,515</span></div>
<div class="t" style="left:659px;top:249.10000000000002px;width:62px;text-align:right;color:#404040;font-size:12.5px;"><span style="transform:scaleX(0.745);transform-origin:100% 50%">2,521</span></div>
<div class="t" style="left:728px;top:249.10000000000002px;width:65.5px;text-align:right;color:#3838b8;font-size:12.5px;"><span style="transform:scaleX(0.745);transform-origin:100% 50%">−0,006</span></div>
<div class="t" style="left:449px;top:268.6px;width:71px;text-align:center;color:#404040;font-size:12.5px;"><span style="transform:scaleX(0.79);transform-origin:50% 50%">25/05/30</span></div>
<div class="t" style="left:520px;top:268.6px;width:63px;text-align:right;color:#404040;font-size:12.5px;"><span style="transform:scaleX(0.745);transform-origin:100% 50%">2,483</span></div>
<div class="t" style="left:589px;top:268.6px;width:64px;text-align:right;color:#404040;font-size:12.5px;"><span style="transform:scaleX(0.745);transform-origin:100% 50%">2,521</span></div>
<div class="t" style="left:659px;top:268.6px;width:62px;text-align:right;color:#404040;font-size:12.5px;"><span style="transform:scaleX(0.745);transform-origin:100% 50%">2,500</span></div>
<div class="t" style="left:728px;top:268.6px;width:65.5px;text-align:right;color:#d04444;font-size:12.5px;"><span style="transform:scaleX(0.745);transform-origin:100% 50%">0,021</span></div>
<div class="t" style="left:449px;top:288.1px;width:71px;text-align:center;color:#404040;font-size:12.5px;"><span style="transform:scaleX(0.79);transform-origin:50% 50%">25/05/29</span></div>
<div class="t" style="left:520px;top:288.1px;width:63px;text-align:right;color:#404040;font-size:12.5px;"><span style="transform:scaleX(0.745);transform-origin:100% 50%">2,464</span></div>
<div class="t" style="left:589px;top:288.1px;width:64px;text-align:right;color:#404040;font-size:12.5px;"><span style="transform:scaleX(0.745);transform-origin:100% 50%">2,500</span></div>
<div class="t" style="left:659px;top:288.1px;width:62px;text-align:right;color:#404040;font-size:12.5px;"><span style="transform:scaleX(0.745);transform-origin:100% 50%">2,467</span></div>
<div class="t" style="left:728px;top:288.1px;width:65.5px;text-align:right;color:#d04444;font-size:12.5px;"><span style="transform:scaleX(0.745);transform-origin:100% 50%">0,033</span></div>
<div class="t" style="left:449px;top:307.6px;width:71px;text-align:center;color:#404040;font-size:12.5px;"><span style="transform:scaleX(0.79);transform-origin:50% 50%">25/05/28</span></div>
<div class="t" style="left:520px;top:307.6px;width:63px;text-align:right;color:#404040;font-size:12.5px;"><span style="transform:scaleX(0.745);transform-origin:100% 50%">2,472</span></div>
<div class="t" style="left:589px;top:307.6px;width:64px;text-align:right;color:#404040;font-size:12.5px;"><span style="transform:scaleX(0.745);transform-origin:100% 50%">2,467</span></div>
<div class="t" style="left:659px;top:307.6px;width:62px;text-align:right;color:#404040;font-size:12.5px;"><span style="transform:scaleX(0.745);transform-origin:100% 50%">2,478</span></div>
<div class="t" style="left:728px;top:307.6px;width:65.5px;text-align:right;color:#3838b8;font-size:12.5px;"><span style="transform:scaleX(0.745);transform-origin:100% 50%">−0,011</span></div>
<div class="t" style="left:449px;top:327.6px;width:71px;text-align:center;color:#404040;font-size:12.5px;"><span style="transform:scaleX(0.79);transform-origin:50% 50%">25/05/27</span></div>
<div class="t" style="left:520px;top:327.6px;width:63px;text-align:right;color:#404040;font-size:12.5px;"><span style="transform:scaleX(0.745);transform-origin:100% 50%">2,492</span></div>
<div class="t" style="left:589px;top:327.6px;width:64px;text-align:right;color:#404040;font-size:12.5px;"><span style="transform:scaleX(0.745);transform-origin:100% 50%">2,478</span></div>
<div class="t" style="left:659px;top:327.6px;width:62px;text-align:right;color:#404040;font-size:12.5px;"><span style="transform:scaleX(0.745);transform-origin:100% 50%">2,504</span></div>
<div class="t" style="left:728px;top:327.6px;width:65.5px;text-align:right;color:#3838b8;font-size:12.5px;"><span style="transform:scaleX(0.745);transform-origin:100% 50%">−0,026</span></div>
<div class="t" style="left:449px;top:347.6px;width:71px;text-align:center;color:#404040;font-size:12.5px;"><span style="transform:scaleX(0.79);transform-origin:50% 50%">25/05/26</span></div>
<div class="t" style="left:520px;top:347.6px;width:63px;text-align:right;color:#404040;font-size:12.5px;"><span style="transform:scaleX(0.745);transform-origin:100% 50%">2,484</span></div>
<div class="t" style="left:589px;top:347.6px;width:64px;text-align:right;color:#404040;font-size:12.5px;"><span style="transform:scaleX(0.745);transform-origin:100% 50%">2,504</span></div>
<div class="t" style="left:659px;top:347.6px;width:62px;text-align:right;color:#404040;font-size:12.5px;"><span style="transform:scaleX(0.745);transform-origin:100% 50%">2,502</span></div>
<div class="t" style="left:728px;top:347.6px;width:65.5px;text-align:right;color:#d04444;font-size:12.5px;"><span style="transform:scaleX(0.745);transform-origin:100% 50%">0,002</span></div>
<div class="t" style="left:449px;top:367.1px;width:71px;text-align:center;color:#404040;font-size:12.5px;"><span style="transform:scaleX(0.79);transform-origin:50% 50%">25/05/23</span></div>
<div class="t" style="left:520px;top:367.1px;width:63px;text-align:right;color:#404040;font-size:12.5px;"><span style="transform:scaleX(0.745);transform-origin:100% 50%">2,501</span></div>
<div class="t" style="left:589px;top:367.1px;width:64px;text-align:right;color:#404040;font-size:12.5px;"><span style="transform:scaleX(0.745);transform-origin:100% 50%">2,502</span></div>
<div class="t" style="left:659px;top:367.1px;width:62px;text-align:right;color:#404040;font-size:12.5px;"><span style="transform:scaleX(0.745);transform-origin:100% 50%">2,493</span></div>
<div class="t" style="left:728px;top:367.1px;width:65.5px;text-align:right;color:#d04444;font-size:12.5px;"><span style="transform:scaleX(0.745);transform-origin:100% 50%">0,009</span></div>
<div class="t" style="left:449px;top:386.6px;width:71px;text-align:center;color:#404040;font-size:12.5px;"><span style="transform:scaleX(0.79);transform-origin:50% 50%">25/05/22</span></div>
<div class="t" style="left:520px;top:386.6px;width:63px;text-align:right;color:#404040;font-size:12.5px;"><span style="transform:scaleX(0.745);transform-origin:100% 50%">2,530</span></div>
<div class="t" style="left:589px;top:386.6px;width:64px;text-align:right;color:#404040;font-size:12.5px;"><span style="transform:scaleX(0.745);transform-origin:100% 50%">2,493</span></div>
<div class="t" style="left:659px;top:386.6px;width:62px;text-align:right;color:#404040;font-size:12.5px;"><span style="transform:scaleX(0.745);transform-origin:100% 50%">2,498</span></div>
<div class="t" style="left:728px;top:386.6px;width:65.5px;text-align:right;color:#3838b8;font-size:12.5px;"><span style="transform:scaleX(0.745);transform-origin:100% 50%">−0,005</span></div>
<div class="t" style="left:449px;top:406.6px;width:71px;text-align:center;color:#404040;font-size:12.5px;"><span style="transform:scaleX(0.79);transform-origin:50% 50%">25/05/21</span></div>
<div class="t" style="left:520px;top:406.6px;width:63px;text-align:right;color:#404040;font-size:12.5px;"><span style="transform:scaleX(0.745);transform-origin:100% 50%">2,500</span></div>
<div class="t" style="left:589px;top:406.6px;width:64px;text-align:right;color:#404040;font-size:12.5px;"><span style="transform:scaleX(0.745);transform-origin:100% 50%">2,498</span></div>
<div class="t" style="left:659px;top:406.6px;width:62px;text-align:right;color:#404040;font-size:12.5px;"><span style="transform:scaleX(0.745);transform-origin:100% 50%">2,467</span></div>
<div class="t" style="left:728px;top:406.6px;width:65.5px;text-align:right;color:#d04444;font-size:12.5px;"><span style="transform:scaleX(0.745);transform-origin:100% 50%">0,031</span></div>
<div class="t" style="left:449px;top:426.1px;width:71px;text-align:center;color:#404040;font-size:12.5px;"><span style="transform:scaleX(0.79);transform-origin:50% 50%">25/05/20</span></div>
<div class="t" style="left:520px;top:426.1px;width:63px;text-align:right;color:#404040;font-size:12.5px;"><span style="transform:scaleX(0.745);transform-origin:100% 50%">2,476</span></div>
<div class="t" style="left:589px;top:426.1px;width:64px;text-align:right;color:#404040;font-size:12.5px;"><span style="transform:scaleX(0.745);transform-origin:100% 50%">2,467</span></div>
<div class="t" style="left:659px;top:426.1px;width:62px;text-align:right;color:#404040;font-size:12.5px;"><span style="transform:scaleX(0.745);transform-origin:100% 50%">2,501</span></div>
<div class="t" style="left:728px;top:426.1px;width:65.5px;text-align:right;color:#3838b8;font-size:12.5px;"><span style="transform:scaleX(0.745);transform-origin:100% 50%">−0,034</span></div>
<div class="t" style="left:449px;top:445.6px;width:71px;text-align:center;color:#404040;font-size:12.5px;"><span style="transform:scaleX(0.79);transform-origin:50% 50%">25/05/19</span></div>
<div class="t" style="left:520px;top:445.6px;width:63px;text-align:right;color:#404040;font-size:12.5px;"><span style="transform:scaleX(0.745);transform-origin:100% 50%">2,463</span></div>
<div class="t" style="left:589px;top:445.6px;width:64px;text-align:right;color:#404040;font-size:12.5px;"><span style="transform:scaleX(0.745);transform-origin:100% 50%">2,501</span></div>
<div class="t" style="left:659px;top:445.6px;width:62px;text-align:right;color:#404040;font-size:12.5px;"><span style="transform:scaleX(0.745);transform-origin:100% 50%">2,445</span></div>
<div class="t" style="left:728px;top:445.6px;width:65.5px;text-align:right;color:#d04444;font-size:12.5px;"><span style="transform:scaleX(0.745);transform-origin:100% 50%">0,056</span></div>
</body></html>
